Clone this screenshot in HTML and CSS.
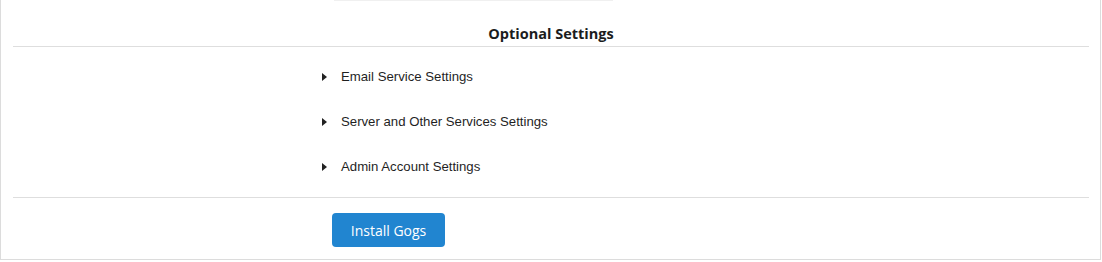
FILE: index.html
```html
<!DOCTYPE html>
<html lang="en">
<head>
  <meta charset="UTF-8">
  <title>Install Gogs</title>
<link rel="stylesheet" href="styles.css">
</head>
<body>
<div class="segment">
    <div class="field-end"></div>
    <h4 class="divider-header">Optional Settings</h4>
    <div class="optional">
        <details class="group">
            <summary><span class="caret"></span>Email Service Settings</summary>
        </details>
        <details class="group">
            <summary><span class="caret"></span>Server and Other Services Settings</summary>
        </details>
        <details class="group">
            <summary><span class="caret"></span>Admin Account Settings</summary>
        </details>
    </div>
    <div class="actions">
        <button class="button primary">Install Gogs</button>
    </div>
</div>
</body>
</html>
```

FILE: styles.css
```css
* {
    box-sizing: border-box;
}
body {
    margin: 0;
    background: #fff;
}
.segment {
    width: 1101px;
    height: 260px;
    border: 1px solid #dcdcdc;
    border-top: none;
    padding: 0 11px 0 12px;
}
.field-end {
    margin-left: 321px;
    width: 279px;
    height: 1px;
    background: #f0f0f0;
}
.divider-header {
    margin: 0;
    padding: 23px 0 2px;
    line-height: 20px;
    height: 46px;
    text-align: center;
    font-family: "Open Sans", sans-serif;
    font-weight: bold;
    font-size: 14.5px;
    color: #1b1c1d;
    border-bottom: 1px solid #dedede;
}
.optional {
    display: flex;
    flex-direction: column;
    gap: 25px;
    padding: 20px 0 20px 309px;
    border-bottom: 1px solid #dedede;
}
.group summary {
    list-style: none;
    display: flex;
    align-items: center;
    line-height: 20px;
    font-family: "Liberation Sans", Arial, sans-serif;
    font-size: 13.2px;
    color: #1f1f1f;
    cursor: pointer;
}
.group summary::-webkit-details-marker {
    display: none;
}
.caret {
    width: 0;
    height: 0;
    border-top: 4px solid transparent;
    border-bottom: 4px solid transparent;
    border-left: 5px solid #222;
    margin-right: 14px;
}
.actions {
    padding: 15px 0 0 319px;
}
.button {
    width: 113px;
    height: 34px;
    border: none;
    border-radius: 4px;
    font-family: "Open Sans", sans-serif;
    font-size: 14px;
    color: #fff;
    cursor: pointer;
}
.button.primary {
    background: #2185d0;
}
```
